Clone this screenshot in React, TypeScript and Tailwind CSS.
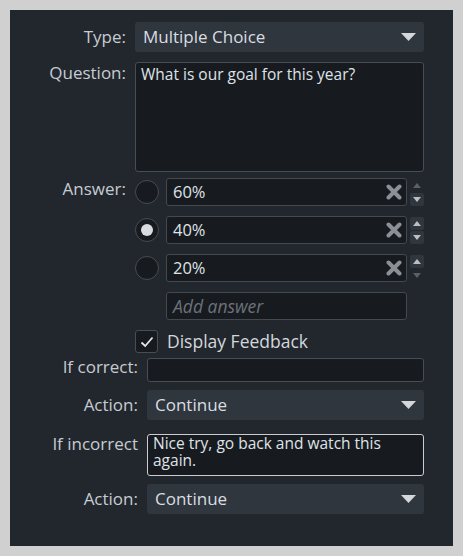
import React from 'react';

const font = { fontFamily: '"Open Sans", Lato, sans-serif' };

const Caret = () => (
    <svg width="15" height="8" viewBox="0 0 15 8" className="shrink-0">
        <polygon points="0,0 15,0 7.5,8" fill="#d3d7db" />
    </svg>
);

const Select: React.FC<{ value: string; className?: string }> = ({ value, className = '' }) => (
    <div className={`flex items-center justify-between h-[30px] rounded-[3px] bg-[#2f363d] pl-[8px] pr-[8px] ${className}`}>
        <span className="text-[17px] text-[#d9dde1]">{value}</span>
        <Caret />
    </div>
);

const XIcon = () => (
    <svg width="16" height="16" viewBox="0 0 16 16">
        <path d="M2.5 2.5 L13.5 13.5 M13.5 2.5 L2.5 13.5" stroke="#8a9096" strokeWidth="4" strokeLinecap="round" />
    </svg>
);

const Arrow: React.FC<{ up?: boolean; enabled: boolean }> = ({ up, enabled }) => (
    <div className={`flex items-center justify-center w-[14px] h-[13px] rounded-[2px] ${enabled ? 'bg-[#2f363d]' : ''}`}>
        <svg width="8" height="5" viewBox="0 0 8 5">
            <polygon points={up ? '0,5 8,5 4,0' : '0,0 8,0 4,5'} fill={enabled ? '#b9bfc5' : '#596068'} />
        </svg>
    </div>
);

const AnswerRow: React.FC<{ value: string; checked?: boolean; upOk: boolean; downOk: boolean }> = ({ value, checked, upOk, downOk }) => (
    <div className="flex items-center">
        <div className="flex items-center justify-center w-[24px] h-[24px] rounded-full border-[1.5px] border-[#474d55] bg-[#171b20] mr-[7px]">
            {checked && <div className="w-[12px] h-[12px] rounded-full bg-[#d8dce0]" />}
        </div>
        <div className="flex items-center justify-between w-[241px] h-[28px] rounded-[3px] border-[1.5px] border-[#434950] bg-[#171b20] pl-[6px] pr-[4px]">
            <span className="text-[16.5px] text-[#dfe3e7]">{value}</span>
            <XIcon />
        </div>
        <div className="flex flex-col gap-[1px] ml-[3px]">
            <Arrow up enabled={upOk} />
            <Arrow enabled={downOk} />
        </div>
    </div>
);

export default function App() {
    return (
        <div className="min-h-[556px] bg-[#d0d0d0] pt-[10px] pl-[10px]" style={font}>
            <div className="w-[443px] h-[536px] bg-[#22272d] pt-[12px]">
                {/* top section */}
                <div className="flex items-center">
                    <div className="w-[116px] text-right text-[17px] text-[#c6ccd2]">Type:</div>
                    <Select value="Multiple Choice" className="ml-[9px] w-[289px]" />
                </div>

                <div className="flex items-start mt-[10px]">
                    <div className="w-[116px] text-right text-[17px] text-[#c6ccd2] leading-[22px]">Question:</div>
                    <div className="ml-[9px] w-[289px] h-[110px] rounded-[3px] border-[1.5px] border-[#474d55] bg-[#171b20] px-[5px] pt-[1px] text-[15.5px] leading-[20px] text-[#dfe3e7]">
                        What is our goal for this year?
                    </div>
                </div>

                <div className="flex items-start mt-[6px]">
                    <div className="w-[116px] text-right text-[17px] text-[#c6ccd2] leading-[22px]">Answer:</div>
                    <div className="ml-[9px] flex flex-col gap-[10px]">
                        <AnswerRow value="60%" upOk={false} downOk />
                        <AnswerRow value="40%" checked upOk downOk />
                        <AnswerRow value="20%" upOk downOk={false} />
                        <div className="ml-[31px] flex items-center w-[241px] h-[28px] rounded-[3px] border-[1.5px] border-[#434950] bg-[#171b20] pl-[6px]">
                            <span className="text-[17.5px] leading-[24px] italic text-[#6c727a]">Add answer</span>
                        </div>
                        <div className="flex items-center h-[23px]">
                            <div className="flex items-center justify-center w-[23px] h-[23px] rounded-[3px] border-[1.5px] border-[#474d55] bg-[#171b20]">
                                <svg width="14" height="12" viewBox="0 0 14 12">
                                    <path d="M1.5 6.5 L5.2 10 L12.5 1.5" stroke="#e4e7ea" strokeWidth="1.8" fill="none" />
                                </svg>
                            </div>
                            <span className="ml-[9px] text-[17.5px] leading-[23px] text-[#d3d8dd]">Display Feedback</span>
                        </div>
                    </div>
                </div>

                {/* feedback section */}
                <div className="flex items-center mt-[5px]">
                    <div className="w-[128px] text-right text-[17px] leading-[24px] text-[#c6ccd2] -mt-[6px]">If correct:</div>
                    <div className="ml-[9px] w-[277px] h-[24px] rounded-[3px] border-[1.5px] border-[#474d55] bg-[#171b20]" />
                </div>

                <div className="flex items-center mt-[8px]">
                    <div className="w-[128px] text-right text-[17px] text-[#c6ccd2]">Action:</div>
                    <Select value="Continue" className="ml-[9px] w-[277px]" />
                </div>

                <div className="flex items-start mt-[14px]">
                    <div className="w-[128px] text-right text-[17px] text-[#c6ccd2] leading-[20px]">If incorrect</div>
                    <div className="ml-[9px] w-[277px] h-[42px] rounded-[3px] border-[1.5px] border-[#c9cdd1] bg-[#171b20] px-[5px] text-[15.5px] leading-[17px] text-[#dfe3e7]">
                        Nice try, go back and watch this again.
                    </div>
                </div>

                <div className="flex items-center mt-[8px]">
                    <div className="w-[128px] text-right text-[17px] text-[#c6ccd2]">Action:</div>
                    <Select value="Continue" className="ml-[9px] w-[277px]" />
                </div>
            </div>
        </div>
    );
}
